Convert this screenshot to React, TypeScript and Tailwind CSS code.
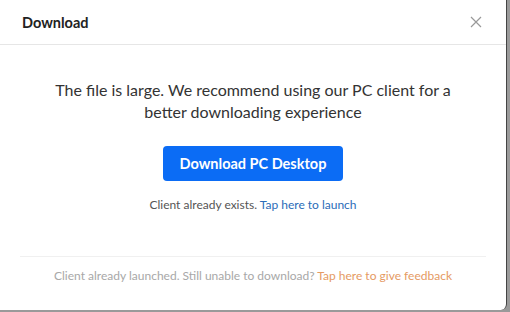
export default function App() {
  return (
    <div className="w-[510px] h-[312px] bg-[#9a9a9a] overflow-hidden">
      <div
        className="w-[507px] h-[310px] bg-white rounded-br-[6px] border-r-[1px] border-[#444] flex flex-col"
        style={{ fontFamily: 'Lato, "Noto Sans", sans-serif' }}
      >
        {/* Header */}
        <div className="h-[45px] flex items-center justify-between pl-[22px] pr-[24px] border-b border-[#e6e6e6] shrink-0">
          <span className="text-[14.5px] font-bold text-[#222] mt-[2px]">Download</span>
          <svg width="12" height="12" viewBox="0 0 12 12" className="text-[#999]">
            <path d="M1 1L11 11M11 1L1 11" stroke="currentColor" strokeWidth="1.2" />
          </svg>
        </div>

        {/* Body */}
        <div className="flex flex-col items-center pt-[34px] flex-1">
          <p className="text-[16px] leading-[22px] text-[#333] text-center w-[420px]">
            The file is large. We recommend using our PC client for a better downloading experience
          </p>
          <button className="mt-[23px] w-[180px] h-[35px] rounded-[4px] bg-[#0b6cf5] text-white text-[14.5px] font-bold">
            Download PC Desktop
          </button>
          <div className="mt-[15px] text-[12px] text-[#555]">
            Client already exists. <span className="text-[#2b6cb8]">Tap here to launch</span>
          </div>
        </div>

        {/* Footer */}
        <div className="mx-[20px] border-t border-[#f0f0f0] h-[38px] flex items-center justify-center shrink-0 mb-[16px]">
          <span className="text-[12px] text-[#a8a8a8]">
            Client already launched. Still unable to download?{" "}
            <span className="text-[#e59a63]">Tap here to give feedback</span>
          </span>
        </div>
      </div>
    </div>
  );
}
